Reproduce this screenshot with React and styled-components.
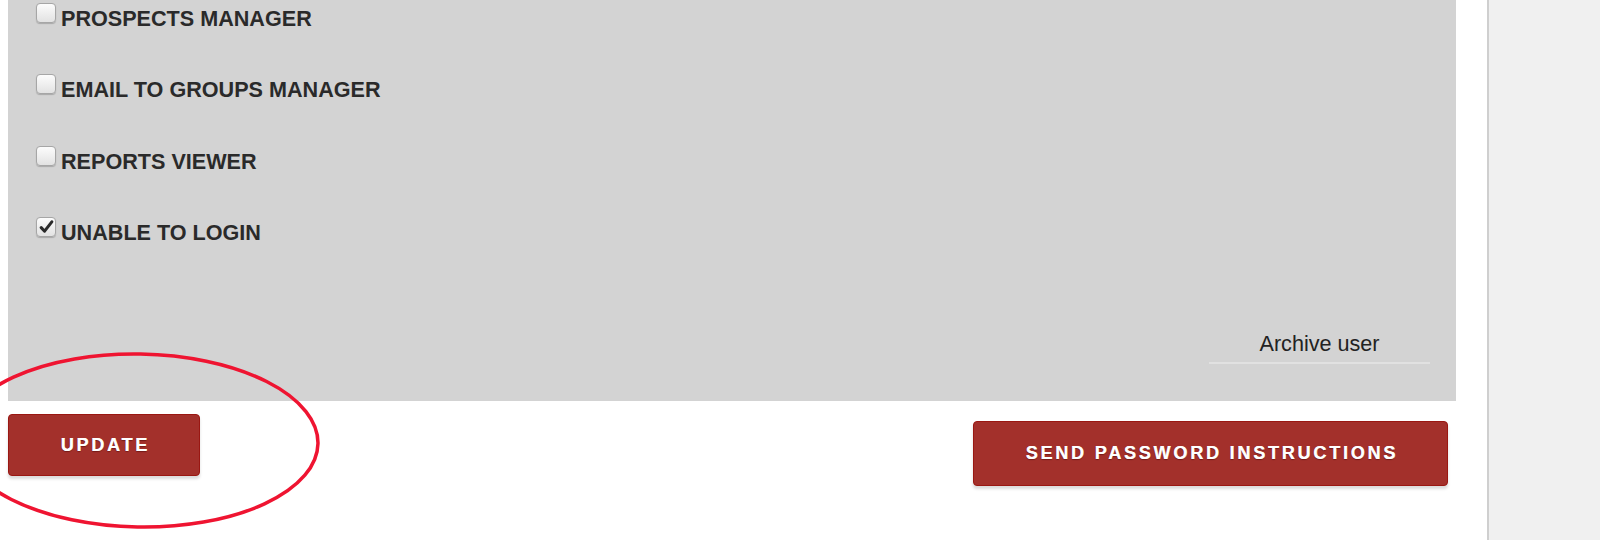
import React from 'react'
import styled, { createGlobalStyle } from 'styled-components'

const GlobalStyle = createGlobalStyle`
  html, body {
    margin: 0;
    padding: 0;
    background: #ffffff;
    font-family: "Liberation Sans", Arial, sans-serif;
  }
`

const Page = styled.div`
  display: flex;
  height: 540px;
  overflow: hidden;
`

const Main = styled.div`
  position: relative;
  width: 1487px;
  flex-shrink: 0;
  padding: 0 31px 0 8px;
  box-sizing: border-box;
`

const Sidebar = styled.div`
  flex: 1;
  background: #f0f0f0;
  border-left: 2px solid #cfcfcf;
`

const Panel = styled.div`
  background: #d3d3d3;
  padding: 1px 26px 37.5px 28px;
`

const RoleList = styled.div`
  display: grid;
  grid-auto-rows: 71.4px;
`

const Role = styled.label`
  display: flex;
  align-items: flex-start;
  gap: 5px;
  font-size: 21.6px;
  font-weight: bold;
  line-height: 36px;
  color: #2a2a2a;
`

const Box = styled.span`
  width: 20px;
  height: 20px;
  margin-top: 2px;
  box-sizing: border-box;
  border: 1px solid #a6a6a6;
  border-radius: 4px;
  background: linear-gradient(#fcfcfc, #e2e2e2);
  box-shadow: 0 1px 1px rgba(0, 0, 0, 0.2);
  display: flex;
  align-items: center;
  justify-content: center;
  flex-shrink: 0;
`

const ArchiveRow = styled.div`
  display: flex;
  justify-content: flex-end;
  margin-top: 44px;
`

const ArchiveLink = styled.a`
  width: 221px;
  text-align: center;
  font-size: 21.6px;
  line-height: 26px;
  color: #222;
  padding-bottom: 5px;
  border-bottom: 2px solid #e1e1e1;
  text-decoration: none;
`

const Actions = styled.div`
  display: flex;
  justify-content: space-between;
  align-items: flex-start;
  margin-top: 13px;
  padding-right: 8px;
`

const RedButton = styled.button`
  width: ${p => p.$w}px;
  height: ${p => p.$h}px;
  margin-top: ${p => p.$top || 0}px;
  background: #a3302b;
  border: 1px solid #9a1712;
  border-radius: 4px;
  box-shadow: 0 3px 3px rgba(0, 0, 0, 0.14);
  color: #fff;
  font-family: "Liberation Sans", Arial, sans-serif;
  font-size: 18px;
  font-weight: bold;
  letter-spacing: 2.8px;
  padding: 0;
  padding-left: 2.8px;
  text-shadow: 0 1px 1px rgba(60, 0, 0, 0.45), 0.3px 0 0 #fff;
  cursor: pointer;
`

const Circle = styled.svg`
  position: absolute;
  left: -50px;
  top: 340px;
  pointer-events: none;
`

const roles = [
  { name: 'PROSPECTS MANAGER', checked: false },
  { name: 'EMAIL TO GROUPS MANAGER', checked: false },
  { name: 'REPORTS VIEWER', checked: false },
  { name: 'UNABLE TO LOGIN', checked: true },
]

const Check = ({ checked }) => (
  <Box>
    {checked && (
      <svg width="15" height="14" viewBox="0 0 15 14">
        <path d="M2.2 7.6 L5.6 11.2 L12.8 1.8" fill="none" stroke="#2a2a2a" strokeWidth="3" strokeLinecap="round" strokeLinejoin="round" />
      </svg>
    )}
  </Box>
)

const App = () => {
  return (
    <>
      <GlobalStyle />
      <Page>
        <Main>
          <Panel>
            <RoleList>
              {roles.map(r => (
                <Role key={r.name}>
                  <Check checked={r.checked} />
                  {r.name}
                </Role>
              ))}
            </RoleList>
            <ArchiveRow>
              <ArchiveLink href="#">Archive user</ArchiveLink>
            </ArchiveRow>
          </Panel>
          <Actions>
            <RedButton $w={192} $h={62}>UPDATE</RedButton>
            <RedButton $w={475} $h={65} $top={7}>SEND PASSWORD INSTRUCTIONS</RedButton>
          </Actions>
          <Circle width="400" height="200" viewBox="0 0 400 200">
            <ellipse cx="189" cy="100.5" rx="179" ry="86.5" fill="none" stroke="#ef1431" strokeWidth="3.5" transform="rotate(1 189 100.5)" />
          </Circle>
        </Main>
        <Sidebar />
      </Page>
    </>
  )
}

export default App
